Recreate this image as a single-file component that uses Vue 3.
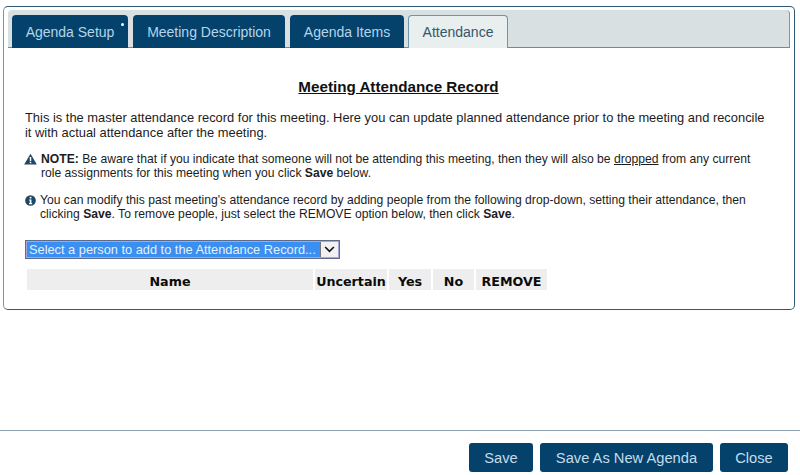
<template>
  <div class="page">
    <div class="panel">
      <div class="tab-bar">
        <button v-for="tab in tabs" :key="tab.label" class="tab" :class="{ active: tab.active }" :style="{ width: tab.width + 'px' }">
          {{ tab.label }}<span v-if="tab.dirty" class="dirty"></span>
        </button>
      </div>
      <div class="content">
        <h1>Meeting Attendance Record</h1>
        <p class="intro">This is the master attendance record for this meeting. Here you can update planned attendance prior to the meeting and reconcile it with actual attendance after the meeting.</p>
        <div class="notice">
          <svg class="icon warn" viewBox="0 0 14 12" width="13" height="12">
            <path d="M7 0.4 L13.8 11.8 L0.2 11.8 Z" fill="#1f4666" />
            <rect x="6.2" y="3.8" width="1.6" height="4.4" fill="#fff" />
            <rect x="6.2" y="9" width="1.6" height="1.6" fill="#fff" />
          </svg>
          <p><b>NOTE:</b> Be aware that if you indicate that someone will not be attending this meeting, then they will also be <u>dropped</u> from any current<br>role assignments for this meeting when you click <b>Save</b> below.</p>
        </div>
        <div class="notice second">
          <svg class="icon info" viewBox="0 0 12 12" width="11" height="11">
            <circle cx="6" cy="6" r="5.8" fill="#1f4666" />
            <rect x="5.1" y="2" width="1.9" height="1.8" fill="#fff" />
            <path d="M4.5 5 H7 V8.8 H7.8 V10 H4.4 V8.8 H5.2 V6.1 H4.5 Z" fill="#fff" />
          </svg>
          <p>You can modify this past meeting's attendance record by adding people from the following drop-down, setting their attendance, then clicking <b>Save</b>. To remove people, just select the REMOVE option below, then click <b>Save</b>.</p>
        </div>
        <div class="select">
          <span class="select-value">Select a person to add to the Attendance Record...</span>
          <span class="select-arrow">
            <svg viewBox="0 0 12 8" width="11" height="7"><path d="M1 1.2 L6 6.2 L11 1.2" fill="none" stroke="#111" stroke-width="1.8" /></svg>
          </span>
        </div>
        <div class="table-head">
          <div v-for="col in columns" :key="col.label" :style="{ width: col.width + 'px' }">{{ col.label }}</div>
        </div>
      </div>
    </div>
    <div class="footer">
      <button class="btn" style="width: 64px">Save</button>
      <button class="btn" style="width: 173px">Save As New Agenda</button>
      <button class="btn" style="width: 68px">Close</button>
    </div>
  </div>
</template>

<script setup>
const tabs = [
  { label: 'Agenda Setup', width: 116, dirty: true },
  { label: 'Meeting Description', width: 152 },
  { label: 'Agenda Items', width: 114 },
  { label: 'Attendance', width: 100, active: true }
]

const columns = [
  { label: 'Name', width: 286 },
  { label: 'Uncertain', width: 72 },
  { label: 'Yes', width: 42 },
  { label: 'No', width: 41 },
  { label: 'REMOVE', width: 71 }
]
</script>

<style>
html, body {
  margin: 0;
  background: #fff;
}
</style>

<style scoped>
.page {
  width: 800px;
  height: 475px;
  padding-top: 6px;
  box-sizing: border-box;
  font-family: "Liberation Sans", Arial, sans-serif;
  color: #1c1c1c;
  display: flex;
  flex-direction: column;
  overflow: hidden;
}

.panel {
  width: 792px;
  height: 304px;
  margin-left: 3px;
  box-sizing: border-box;
  border: 1px solid #2f5a76;
  border-left-color: #7c95a6;
  border-radius: 5px;
  padding: 3px 4px;
}

.tab-bar {
  height: 38px;
  box-sizing: border-box;
  background: #d9e0e1;
  border-bottom: 1px solid #6f8a9c;
  border-right: 1px solid #7d95a5;
  border-radius: 4px 4px 0 0;
  padding: 5px 0 0 4px;
  display: flex;
  gap: 5px;
}

.tab {
  position: relative;
  height: 33px;
  box-sizing: border-box;
  padding: 0;
  border: none;
  border-radius: 4px 4px 0 0;
  background: #04426c;
  color: #b5d5e8;
  font: 14px "Liberation Sans", Arial, sans-serif;
  text-align: center;
}

.tab.active {
  margin-left: -1px;
  background: #e9eeee;
  color: #33566d;
  border: 1px solid #6f93aa;
  border-bottom: none;
}

.dirty {
  position: absolute;
  top: 8px;
  right: 4px;
  width: 3px;
  height: 3px;
  border-radius: 50%;
  background: #fff;
}

.content {
  padding: 0 18px 0 17px;
}

h1 {
  margin: 31px 0 0;
  font-size: 15.2px;
  line-height: 16px;
  text-align: center;
  text-decoration: underline;
  color: #111;
}

.intro {
  margin: 15px 0 0;
  font-size: 12.9px;
  line-height: 15px;
}

.notice {
  margin-top: 12px;
  display: flex;
  font-size: 12.15px;
  line-height: 14px;
}

.notice p {
  margin: 0;
}

.notice.second {
  margin-top: 13px;
}

.icon {
  flex: none;
}

.warn {
  margin: 1px 4px 0 -1px;
}

.info {
  margin: 2px 4px 0 0;
}

.select {
  width: 315px;
  height: 19px;
  margin-top: 19px;
  box-sizing: border-box;
  border: 2px solid #a9a6d4;
  outline: 1px solid #5d6b8c;
  outline-offset: -1px;
  display: flex;
  font-size: 12.8px;
  line-height: 15px;
}

.select-value {
  flex: 1;
  background: #3a8ff0;
  color: #e4f0fb;
  padding-left: 2px;
  white-space: nowrap;
  overflow: hidden;
}

.select-arrow {
  width: 17px;
  background: #f1f1f1;
  border-left: 1px solid #777;
  display: flex;
  align-items: center;
  justify-content: center;
}

.table-head {
  display: flex;
  gap: 2px;
  margin: 10px 0 0 2px;
}

.table-head div {
  height: 21px;
  background: #eeeeee;
  text-align: center;
  font: bold 12.7px/25px "DejaVu Sans", Verdana, sans-serif;
  color: #0b0b0b;
  white-space: nowrap;
}

.footer {
  margin-top: 120px;
  height: 44px;
  box-sizing: border-box;
  border-top: 1px solid #8da0ad;
  padding: 12px 12px 0 0;
  display: flex;
  justify-content: flex-end;
  gap: 7px;
}

.btn {
  height: 29px;
  padding: 0;
  border: none;
  border-radius: 3px;
  background: #04426c;
  color: #c4dcea;
  font: 14.7px "Liberation Sans", Arial, sans-serif;
}
</style>
